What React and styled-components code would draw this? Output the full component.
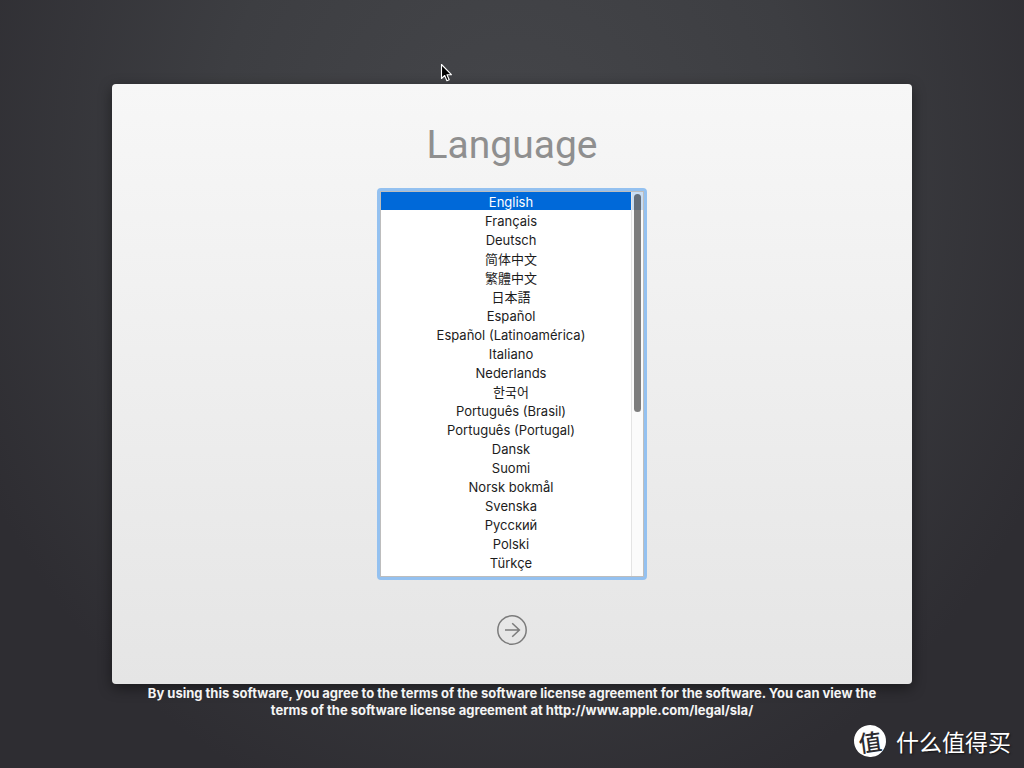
import React, { useState } from "react";

import styled, { createGlobalStyle } from "styled-components";

const GlobalStyle = createGlobalStyle`
  * {
    box-sizing: border-box;
  }
  body {
    margin: 0;
    background: #2e2d32;
    font-family: Inter, "Noto Sans CJK SC", sans-serif;
  }
`;

const Desktop = styled.div`
  position: relative;
  min-height: 100vh;
  padding: 84px 112px 0;
  overflow: hidden;
  background: radial-gradient(
    ellipse 58% 88% at 50% 22%,
    #45464a 0%,
    #3d3e42 50%,
    #2e2d32 100%
  );
`;

const Panel = styled.main`
  display: flex;
  flex-direction: column;
  align-items: center;
  padding: 37px 24px 39px;
  border-radius: 4px;
  background: linear-gradient(#f7f7f7, #e5e5e5);
  box-shadow: 0 4px 14px rgba(0, 0, 0, 0.45);
`;

const Title = styled.label`
  color: #8f8f8f;
  font-family: Roboto, sans-serif;
  font-size: 39px;
  font-weight: 400;
  line-height: 48px;
`;

const ListFrame = styled.div`
  position: relative;
  width: 270px;
  margin-top: 19px;
  border: 3px solid #94c1f0;
  border-radius: 4px;
  background: #fff;
`;

const LanguageList = styled.select`
  display: block;
  width: 100%;
  height: 386px;
  padding: 0;
  border: 1px solid #bdbdbd;
  border-radius: 0;
  outline: none;
  background: #fff;
  color: #1c1c1c;
  font-family: inherit;
  font-size: 13px;
  overflow: hidden;
`;

const Language = styled.option`
  height: 19px;
  min-height: 19px;
  padding: ${(props) => (props.$cjk ? "0" : "2px")} 2px 0 0;
  border-bottom: 1px solid transparent;
  text-align: center;

  &:checked {
    background: linear-gradient(#0069d9, #0069d9) padding-box;
    color: #fff;
  }
`;

const Scroller = styled.div`
  position: absolute;
  top: 1px;
  right: 1px;
  bottom: 1px;
  width: 12px;
  padding: 2px;
  border-left: 1px solid #e4e4e4;
  background: rgba(250, 250, 250, 0.8);
  pointer-events: none;
`;

const Thumb = styled.div`
  width: 7px;
  height: 218px;
  border-radius: 4px;
  background: rgba(0, 0, 0, 0.5);
`;

const NextButton = styled.button`
  width: 30px;
  height: 30px;
  margin-top: 35px;
  padding: 0;
  border: none;
  background: none;
  color: #7b7b7b;

  svg {
    display: block;
  }
`;

const Agreement = styled.p`
  margin: 0;
  padding: 1px 16px 0;
  color: #f4f4f4;
  font-size: 13px;
  font-weight: 700;
  line-height: 17px;
  text-align: center;
`;

const Pointer = styled.svg`
  position: absolute;
  top: 63px;
  left: 440px;
`;

const Watermark = styled.div`
  position: absolute;
  right: 13px;
  bottom: 11px;
  display: flex;
  align-items: center;
  gap: 10px;
  color: #fff;
  font-family: "Noto Sans CJK SC", sans-serif;
  font-size: 23px;
  line-height: 30px;
  text-shadow: 1px 1px 2px rgba(0, 0, 0, 0.6);
`;

const Badge = styled.span`
  display: flex;
  align-items: center;
  justify-content: center;
  width: 32px;
  height: 32px;
  border-radius: 50%;
  background: #fff;
  color: #2c2b30;
  font-weight: 500;
  text-shadow: none;
  transform: rotate(-8deg);
`;

const languages = [
  { name: "English", code: "en" },
  { name: "Français", code: "fr" },
  { name: "Deutsch", code: "de" },
  { name: "简体中文", code: "zh-Hans", cjk: true },
  { name: "繁體中文", code: "zh-Hant", cjk: true },
  { name: "日本語", code: "ja", cjk: true },
  { name: "Español", code: "es" },
  { name: "Español (Latinoamérica)", code: "es-419" },
  { name: "Italiano", code: "it" },
  { name: "Nederlands", code: "nl" },
  { name: "한국어", code: "ko", cjk: true },
  { name: "Português (Brasil)", code: "pt-BR" },
  { name: "Português (Portugal)", code: "pt-PT" },
  { name: "Dansk", code: "da" },
  { name: "Suomi", code: "fi" },
  { name: "Norsk bokmål", code: "nb" },
  { name: "Svenska", code: "sv" },
  { name: "Русский", code: "ru" },
  { name: "Polski", code: "pl" },
  { name: "Türkçe", code: "tr" },
];

function LanguagePicker() {
  const [selected, setSelected] = useState("en");
  return (
    <ListFrame>
      <LanguageList
        id="language"
        size={20}
        value={selected}
        onChange={(e) => setSelected(e.target.value)}
      >
        {languages.map((language) => (
          <Language
            key={language.code}
            value={language.code}
            lang={language.code}
            $cjk={language.cjk}
          >
            {language.name}
          </Language>
        ))}
      </LanguageList>
      <Scroller>
        <Thumb />
      </Scroller>
    </ListFrame>
  );
}

function App() {
  return (
    <>
      <GlobalStyle />
      <Desktop>
        <Panel>
          <Title htmlFor="language">Language</Title>
          <LanguagePicker />
          <NextButton type="button" aria-label="Continue">
            <svg
              width="30"
              height="30"
              viewBox="0 0 30 30"
              fill="none"
              stroke="currentColor"
              strokeWidth="1.5"
            >
              <circle cx="15" cy="15" r="14.2" />
              <path d="M8 15h14.2M15.2 8.2L22.4 15l-7.2 6.8" />
            </svg>
          </NextButton>
        </Panel>
        <Agreement>
          By using this software, you agree to the terms of the software license
          agreement for the software. You can view the terms of the software
          license agreement at http://www.apple.com/legal/sla/
        </Agreement>
        <Pointer width="13" height="20" viewBox="0 0 13 20">
          <path
            d="M1.5 1.5v14l3.2-3 2.2 5.2 2.3-1-2.2-5h4.4z"
            fill="#000"
            stroke="#fff"
            strokeWidth="1.1"
            strokeLinejoin="round"
          />
        </Pointer>
        <Watermark>
          <Badge>值</Badge>
          什么值得买
        </Watermark>
      </Desktop>
    </>
  );
}

export default App;
